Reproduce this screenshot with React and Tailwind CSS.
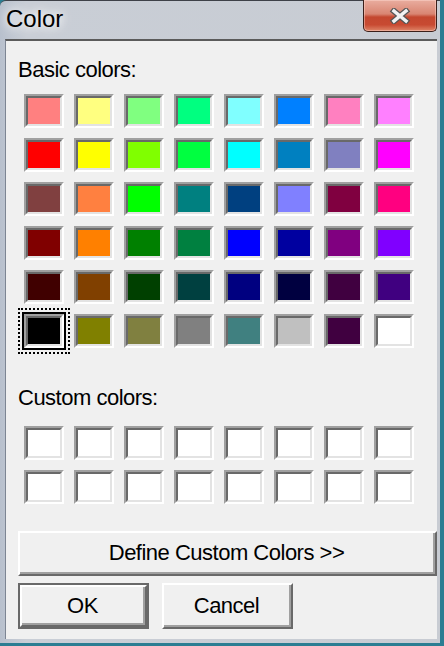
const basic = [
  ['#ff8080', '#ffff80', '#80ff80', '#00ff80', '#80ffff', '#0080ff', '#ff80c0', '#ff80ff'],
  ['#ff0000', '#ffff00', '#80ff00', '#00ff40', '#00ffff', '#0080c0', '#8080c0', '#ff00ff'],
  ['#804040', '#ff8040', '#00ff00', '#008080', '#004080', '#8080ff', '#800040', '#ff0080'],
  ['#800000', '#ff8000', '#008000', '#008040', '#0000ff', '#0000a0', '#800080', '#8000ff'],
  ['#400000', '#804000', '#004000', '#004040', '#000080', '#000040', '#400040', '#400080'],
  ['#000000', '#808000', '#808040', '#808080', '#408080', '#c0c0c0', '#400040', '#ffffff'],
]

const custom = Array(16).fill('#ffffff')

function Swatch({ color, selected }) {
  return (
    <div
      className={
        selected
          ? 'h-[34px] w-[40px] border-2 border-t-[#a0a0a0] border-l-[#a0a0a0] border-b-white border-r-white shadow-[0_0_0_2px_#000] outline-2 outline-dotted outline-black outline-offset-4'
          : 'h-[34px] w-[40px] border-2 border-t-[#a0a0a0] border-l-[#a0a0a0] border-b-white border-r-white'
      }
    >
      <div
        className="h-full w-full border-2 border-t-[#696969] border-l-[#696969] border-b-[#e3e3e3] border-r-[#e3e3e3]"
        style={{ backgroundColor: color }}
      />
    </div>
  )
}

function Button({ children, className, isDefault }) {
  const face = (
    <div className="h-full w-full border-2 border-t-white border-l-white border-b-[#696969] border-r-[#696969]">
      <div className="flex h-full w-full items-center justify-center border-b-2 border-r-2 border-b-[#a0a0a0] border-r-[#a0a0a0] text-[22px] tracking-[-0.5px] text-black">
        {children}
      </div>
    </div>
  )
  return (
    <div className={`${className} ${isDefault ? 'border-2 border-[#696969]' : ''} bg-[#f0f0f0]`}>
      {face}
    </div>
  )
}

export default function App() {
  return (
    <div className="h-[646px] w-[444px] bg-[#2b7d92] font-['Liberation_Sans',Arial,sans-serif]">
      <div className="flex h-[643px] w-[440px] flex-col rounded-tl-[6px] border-t border-[#3e4148] bg-[linear-gradient(90deg,#b8c0cd,#c9ced6_6%,#c8ccd3)] pb-[4px] pl-[5px] pr-[3px]">
        {/* title bar */}
        <div className="flex h-[38px] items-start justify-between">
          <span className="mt-[6px] pl-[1px] text-[24px] leading-[24px] text-black [text-shadow:0_0_8px_#fff,0_0_14px_#fff]">
            Color
          </span>
          <div className="-mt-px flex h-[32px] w-[74px] items-center justify-center rounded-b-[5px] border border-t-0 border-[#3b1f1a] bg-[linear-gradient(#e9ad9f,#d98572_45%,#c4472f_55%,#c84a32_80%,#de8669)] shadow-[inset_0_0_0_1px_rgba(255,220,210,0.45)]">
            <svg width="22" height="16" viewBox="0 0 22 16">
              <path d="M5 3 L17 13 M17 3 L5 13" stroke="#555" strokeWidth="6" strokeLinecap="square" />
              <path d="M5 3 L17 13 M17 3 L5 13" stroke="#f2f2f2" strokeWidth="3.5" strokeLinecap="square" />
            </svg>
          </div>
        </div>

        {/* client area */}
        <div className="flex flex-1 flex-col border-t-2 border-l border-t-[#5b5b5b] border-l-[#7d8593] bg-[#f0f0f0] pl-[12px] text-black">
          <div className="mt-[17px] text-[22px] leading-[24px] tracking-[-0.5px]">Basic colors:</div>
          <div className="ml-[6px] mt-[12px] grid grid-cols-[repeat(8,40px)] gap-x-[10px] gap-y-[10px]">
            {basic.flat().map((c, i) => (
              <Swatch key={i} color={c} selected={i === 40} />
            ))}
          </div>

          <div className="mt-[38px] text-[22px] leading-[24px] tracking-[-0.5px]">Custom colors:</div>
          <div className="ml-[6px] mt-[16px] grid grid-cols-[repeat(8,40px)] gap-x-[10px] gap-y-[10px]">
            {custom.map((c, i) => (
              <Swatch key={i} color={c} />
            ))}
          </div>

          <Button className="mt-[27px] h-[45px] w-[419px]">Define Custom Colors &gt;&gt;</Button>
          <div className="mt-[7px] flex gap-[13px]">
            <Button className="h-[46px] w-[131px]" isDefault>OK</Button>
            <Button className="h-[46px] w-[131px]">Cancel</Button>
          </div>
        </div>
      </div>
    </div>
  )
}
